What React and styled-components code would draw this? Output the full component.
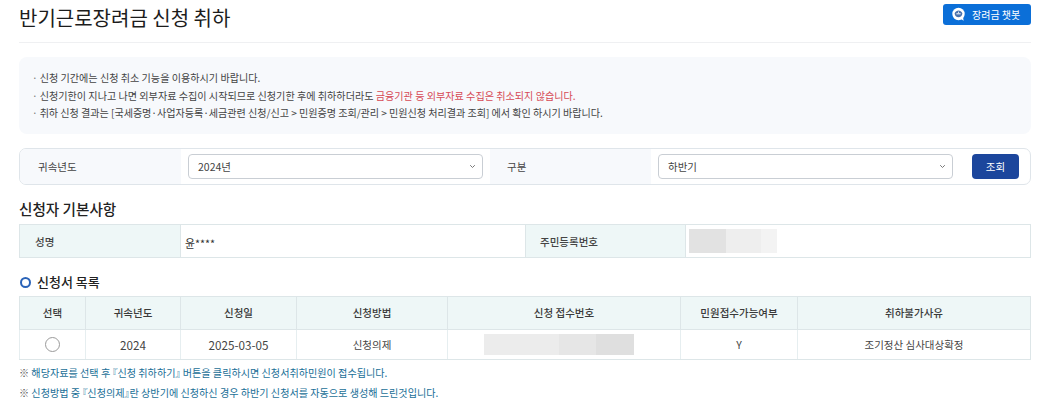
import React from "react";
import styled, { createGlobalStyle } from "styled-components";

const GlobalStyle = createGlobalStyle`
  html, body {
    margin: 0;
    padding: 0;
    background: #fff;
    overflow: hidden;
  }
  * {
    box-sizing: border-box;
  }
`;

const Page = styled.div`
  width: 1040px;
  height: 406px;
  padding: 0 9px 0 19px;
  font-family: "Noto Sans CJK KR", "Noto Sans", sans-serif;
  color: #333;
  overflow: hidden;
`;

const Header = styled.header`
  height: 43px;
  display: flex;
  justify-content: space-between;
  align-items: flex-start;
  border-bottom: 1px solid #eff0f2;
`;

const Title = styled.h1`
  margin: 0;
  font-size: 20px;
  line-height: 36px;
  font-weight: 400;
  color: #1c1c1c;
`;

const ChatButton = styled.button`
  margin: 4px 0 0;
  width: 88px;
  height: 21px;
  border: 0;
  border-radius: 3px;
  background: #0b6fd8;
  color: #fff;
  font-family: inherit;
  font-size: 10px;
  display: flex;
  align-items: center;
  gap: 6px;
  padding: 0 0 0 8px;
`;

const Notice = styled.ul`
  list-style: none;
  margin: 14px 0 0;
  padding: 12px 13px 0;
  height: 77px;
  background: #f7f9fc;
  border-radius: 8px;
`;

const NoticeItem = styled.li`
  font-size: 10.1px;
  line-height: 17.6px;
  color: #444;
  white-space: nowrap;
  font-feature-settings: "palt";
  letter-spacing: ${(p) => p.$squeeze || 0}px;
  &::before {
    content: "·";
    margin-right: 2px;
    color: #777;
  }
`;

const Red = styled.span`
  color: #d64a55;
`;

const SearchBar = styled.div`
  margin-top: 14px;
  height: 37px;
  border: 1px solid #dfe5ea;
  border-radius: 7px;
  display: grid;
  grid-template-columns: 161px 7px 295px 7px 161px 7px 295px 1fr;
  align-items: stretch;
  overflow: hidden;
`;

const SearchLabel = styled.div`
  grid-column: ${(p) => p.$col};
  background: #f7f9fc;
  font-size: 10.5px;
  color: #444;
  display: flex;
  align-items: center;
  padding-left: ${(p) => p.$pad}px;
`;

const SelectBox = styled.div`
  grid-column: ${(p) => p.$col};
  align-self: center;
  height: 25px;
  border: 1px solid #c9ced4;
  border-radius: 4px;
  background: #fff;
  font-size: 10.5px;
  color: #444;
  display: flex;
  align-items: center;
  justify-content: space-between;
  padding: 0 6px 0 9px;
`;

const ButtonCell = styled.div`
  display: flex;
  align-items: center;
  justify-content: flex-end;
  padding-right: 11px;
`;

const SearchButton = styled.button`
  width: 47px;
  height: 25px;
  border: 0;
  border-radius: 4px;
  background: #1c469c;
  color: #fff;
  font-family: inherit;
  font-size: 10.5px;
  padding: 0;
`;

const SectionTitle = styled.h2`
  margin: 15px 0 0;
  font-size: 14.6px;
  line-height: 18px;
  height: 24px;
  font-weight: 500;
  color: #222;
`;

const InfoTable = styled.div`
  height: 34px;
  border: 1px solid #dde6e8;
  border-width: 1px 1px 1px 0;
  display: grid;
  grid-template-columns: 162px 344px 161px 1fr;
`;

const InfoLabel = styled.div`
  background: #eef7f7;
  border-left: 1px solid #dde6e8;
  border-right: 1px solid #dde6e8;
  font-size: 10.5px;
  font-weight: 500;
  color: #444;
  display: flex;
  align-items: center;
  padding-left: ${(p) => p.$pad}px;
`;

const InfoValue = styled.div`
  font-size: 10.8px;
  color: #333;
  display: flex;
  align-items: center;
  padding-left: 3px;
`;

const MaskedName = styled.span`
  padding: 4px 0 0 1px;
`;

const Blur = styled.div`
  width: ${(p) => p.$w}px;
  height: ${(p) => p.$h}px;
  margin-right: ${(p) => p.$shift || 0}px;
  background: ${(p) => p.$bg};
`;

const ListTitle = styled.h3`
  margin: 14px 0 0;
  height: 24px;
  font-size: 13px;
  line-height: 18px;
  font-weight: 500;
  color: #222;
  display: flex;
  align-items: center;
  gap: 6px;
  padding-bottom: 4px;
  &::before {
    content: "";
    width: 7px;
    height: 7px;
    margin-left: 1px;
    border: 2px solid #2a63b8;
    border-radius: 50%;
  }
`;

const ListTable = styled.div`
  border: 1px solid #dde6e8;
  border-width: 1px 1px 1px 0;
  display: grid;
  grid-template-columns: 66px 95px 116px 151px 233px 117px 1fr;
  grid-template-rows: 33px 29px;
`;

const HeadCell = styled.div`
  background: #eef7f7;
  border-left: 1px solid #dde6e8;
  border-bottom: 1px solid #dde6e8;
  font-size: 10.5px;
  font-weight: 500;
  color: #3a3a3a;
  display: flex;
  align-items: center;
  justify-content: center;
  padding-bottom: 1px;
`;

const BodyCell = styled.div`
  border-left: 1px solid #e6eef0;
  font-size: ${(p) => (p.$num ? 11.7 : 10.5)}px;
  color: #444;
  display: flex;
  align-items: center;
  justify-content: center;
`;

const Radio = styled.span`
  width: 15px;
  height: 15px;
  border: 1px solid #9a9a9a;
  border-radius: 50%;
  background: #fff;
`;

const Note = styled.p`
  margin: 0;
  height: 20px;
  font-size: 10.1px;
  line-height: 20px;
  color: #1a6f97;
  white-space: nowrap;
  font-feature-settings: "palt";
  &:first-of-type {
    margin-top: 3px;
  }
`;

const Mark = styled.span`
  color: #555;
`;

const BotIcon = () => (
  <svg width="15" height="15" viewBox="0 0 15 15">
    <circle cx="7.5" cy="7" r="6.2" fill="#fff" />
    <path d="M10 12l2.6 1.8-.5-3.4z" fill="#fff" />
    <path d="M3.6 6.2c1-1.9 2.4-2.7 3.9-2.7s2.9.8 3.9 2.7c-.2 2.4-1.8 4-3.9 4s-3.7-1.6-3.9-4z" fill="#4a72ad" />
    <path d="M5.4 6.8h4.2" stroke="#fff" strokeWidth="1" />
    <path d="M7.5 4.6v1.4" stroke="#fff" strokeWidth=".8" />
  </svg>
);

const Chevron = () => (
  <svg width="7" height="5" viewBox="0 0 7 5">
    <path d="M1.2 1.2L3.5 3.5l2.3-2.3" fill="none" stroke="#777" strokeWidth="1" />
  </svg>
);

const heads = ["선택", "귀속년도", "신청일", "신청방법", "신청 접수번호", "민원접수가능여부", "취하불가사유"];

export default function App() {
  return (
    <Page>
      <GlobalStyle />
      <Header>
        <Title>반기근로장려금 신청 취하</Title>
        <ChatButton>
          <BotIcon />
          장려금 챗봇
        </ChatButton>
      </Header>

      <Notice>
        <NoticeItem>신청 기간에는 신청 취소 기능을 이용하시기 바랍니다.</NoticeItem>
        <NoticeItem>
          신청기한이 지나고 나면 외부자료 수집이 시작되므로 신청기한 후에 취하하더라도{" "}
          <Red>금융기관 등 외부자료 수집은 취소되지 않습니다.</Red>
        </NoticeItem>
        <NoticeItem $squeeze={-0.04}>
          취하 신청 결과는 [국세증명·사업자등록·세금관련 신청/신고 &gt; 민원증명 조회/관리 &gt; 민원신청 처리결과 조회] 에서 확인 하시기 바랍니다.
        </NoticeItem>
      </Notice>

      <SearchBar>
        <SearchLabel $col="1" $pad={18}>귀속년도</SearchLabel>
        <SelectBox $col="3">
          2024년
          <Chevron />
        </SelectBox>
        <SearchLabel $col="5" $pad={17}>구분</SearchLabel>
        <SelectBox $col="7">
          하반기
          <Chevron />
        </SelectBox>
        <ButtonCell>
          <SearchButton>조회</SearchButton>
        </ButtonCell>
      </SearchBar>

      <SectionTitle>신청자 기본사항</SectionTitle>
      <InfoTable>
        <InfoLabel $pad={15}>성명</InfoLabel>
        <InfoValue>
          <MaskedName>윤****</MaskedName>
        </InfoValue>
        <InfoLabel $pad={14}>주민등록번호</InfoLabel>
        <InfoValue>
          <Blur $w={88} $h={24} $bg="linear-gradient(90deg, #e2e2e2 0 42%, #eeeeee 42% 82%, #f3f3f3 82%)" />
        </InfoValue>
      </InfoTable>

      <ListTitle>신청서 목록</ListTitle>
      <ListTable>
        {heads.map((head) => (
          <HeadCell key={head}>{head}</HeadCell>
        ))}
        <BodyCell>
          <Radio />
        </BodyCell>
        <BodyCell $num>2024</BodyCell>
        <BodyCell $num>2025-03-05</BodyCell>
        <BodyCell>신청의제</BodyCell>
        <BodyCell>
          <Blur $w={150} $h={21} $shift={10} $bg="linear-gradient(90deg, #ececec 0 50%, #e6e6e6 50% 75%, #dfdfdf 75%)" />
        </BodyCell>
        <BodyCell>Y</BodyCell>
        <BodyCell>조기정산 심사대상확정</BodyCell>
      </ListTable>

      <Note>
        <Mark>※</Mark> 해당자료를 선택 후 『신청 취하하기』 버튼을 클릭하시면 신청서취하민원이 접수됩니다.
      </Note>
      <Note>
        <Mark>※</Mark> 신청방법 중 『신청의제』란 상반기에 신청하신 경우 하반기 신청서를 자동으로 생성해 드린것입니다.
      </Note>
    </Page>
  );
}
